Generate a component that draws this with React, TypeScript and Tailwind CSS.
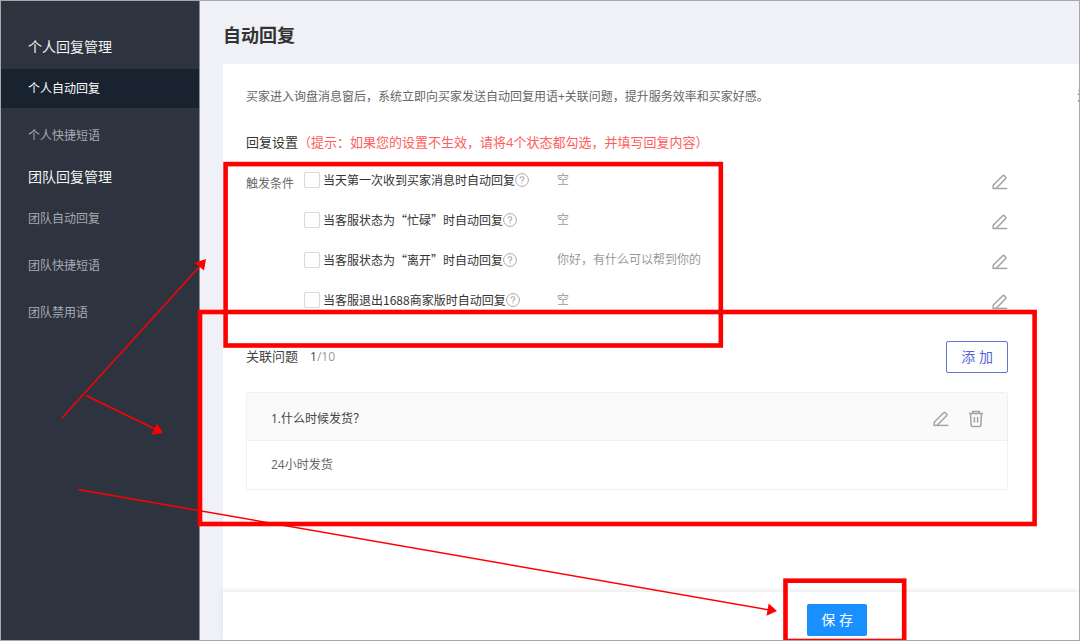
const menu = [
    { title: "个人回复管理", items: ["个人自动回复", "个人快捷短语"] },
    { title: "团队回复管理", items: ["团队自动回复", "团队快捷短语", "团队禁用语"] },
];

const conditions = [
    { id: "first", label: "当天第一次收到买家消息时自动回复", reply: "空" },
    { id: "busy", label: "当客服状态为“忙碌”时自动回复", reply: "空" },
    { id: "away", label: "当客服状态为“离开”时自动回复", reply: "你好，有什么可以帮到你的" },
    { id: "logout", label: "当客服退出1688商家版时自动回复", reply: "空" },
];

const EditIcon = () => (
    <svg width="16" height="16" viewBox="0 0 16 16" fill="none" stroke="#a3a3a3" strokeWidth="1.5">
        <path d="M1.2 14.4V11.2L10.6 1.8Q11.5 1 12.4 1.8L13.5 2.9Q14.3 3.8 13.5 4.7L4.2 14.2" />
        <path d="M0.6 14.4H15.3" />
    </svg>
);

const TrashIcon = () => (
    <svg width="16" height="18" viewBox="0 0 16 18" fill="none" stroke="#a3a3a3" strokeWidth="1.5">
        <path d="M1 3.6H15M4.6 3.4V1.6H11.4V3.4" />
        <path d="M2.5 3.8L3.2 15.4Q3.3 16.4 4.3 16.4H11.7Q12.7 16.4 12.8 15.4L13.5 3.8" />
        <path d="M6.4 7V12.6M9.6 7V12.6" />
    </svg>
);

const HelpIcon = () => (
    <svg width="14" height="14" viewBox="0 0 14 14" fill="none" stroke="#a8a8a8">
        <circle cx="7" cy="7" r="6.4" />
        <path d="M5.1 5.6Q5.1 3.8 7 3.8T8.9 5.5Q8.9 6.4 7.8 7T7 8.5" strokeWidth="1.1" />
        <path d="M7 9.5V10.6" strokeWidth="1.2" />
    </svg>
);

const Sidebar = () => (
    <nav className="w-[199px] shrink-0 border-r border-[#8b8e94] bg-[#2d3440] pt-6">
        {menu.map((group) => (
            <div key={group.title}>
                <h2 className="flex h-11 items-center pl-[27px] text-sm text-[#f2f3f4]">{group.title}</h2>
                <ul className="flex flex-col gap-2">
                    {group.items.map((item) => (
                        <li key={item}>
                            <a
                                href="#"
                                className={
                                    item === "个人自动回复"
                                        ? "flex h-[39px] items-center bg-[#19222f] pl-[27px] text-xs text-white"
                                        : "flex h-[39px] items-center pl-[27px] text-xs text-[#a7aaaf]"
                                }
                            >
                                {item}
                            </a>
                        </li>
                    ))}
                </ul>
            </div>
        ))}
    </nav>
);

const Conditions = () => (
    <div className="mt-[10px] flex">
        <div className="w-[58px] shrink-0 pt-2 text-xs leading-6 text-[#666]">触发条件</div>
        <ul className="flex-1">
            {conditions.map((c) => (
                <li key={c.id} className="flex h-10 items-start">
                    <div className="flex h-8 w-[253px] items-center">
                        <input
                            id={c.id}
                            type="checkbox"
                            className="h-4 w-4 shrink-0 appearance-none rounded-xs border border-[#d9d9d9] bg-white"
                        />
                        <label
                            htmlFor={c.id}
                            className="ml-[3px] font-['Noto_Sans_CJK_SC',sans-serif] text-xs whitespace-nowrap text-[#333]"
                        >
                            {c.label}
                        </label>
                        <button type="button" aria-label="?" className="shrink-0">
                            <HelpIcon />
                        </button>
                    </div>
                    <span className="flex h-8 flex-1 items-center text-xs text-[#999]">{c.reply}</span>
                    <button type="button" aria-label="编辑" className="pt-[10px]">
                        <EditIcon />
                    </button>
                </li>
            ))}
        </ul>
    </div>
);

const Questions = () => (
    <section>
        <div className="mt-[17px] flex h-8 items-center justify-between">
            <h3 className="text-[13px] text-[#444]">
                关联问题<span className="ml-3 text-xs">1</span>
                <span className="text-xs text-[#999]">/10</span>
            </h3>
            <button type="button" className="h-8 rounded-xs border border-[#6673d9] px-[14px] text-sm text-[#5566d4]">
                添 加
            </button>
        </div>
        <div className="mt-[19px] rounded-xs border border-[#f0f0f0] text-xs">
            <div className="flex h-12 items-center border-b border-[#f0f0f0] bg-[#fafafa] pr-[23px] pl-6">
                <span className="flex-1 pt-1 text-[#444]">1.什么时候发货？</span>
                <div className="flex items-center gap-[19px] pt-1">
                    <button type="button" aria-label="编辑">
                        <EditIcon />
                    </button>
                    <button type="button" aria-label="删除">
                        <TrashIcon />
                    </button>
                </div>
            </div>
            <p className="flex h-12 items-center pl-6 text-[#666]">24小时发货</p>
        </div>
    </section>
);

// red frames and arrows drawn over the page
const Marks = () => (
    <svg className="pointer-events-none absolute inset-0 h-full w-full" fill="none" stroke="#f00">
        <g transform="translate(-1 -1)">
            <g strokeWidth="4.6">
                <rect x="225.6" y="164.1" width="495.2" height="181.4" />
                <rect x="200" y="312" width="834.6" height="212" />
                <rect x="785.5" y="580.7" width="118.7" height="60.3" />
            </g>
            <g strokeWidth="1.5">
                <path d="M62 418L200 266" />
                <path d="M86 395.5L156 429.5" />
                <path d="M78 489.5L768 609.7" />
            </g>
            <g fill="#f00" stroke="none">
                <path d="M206 259L194.5 262.7L204 270.5Z" />
                <path d="M163 433L157 423.5L151.5 434.7Z" />
                <path d="M777 611L768.7 603.5L766.5 615.7Z" />
            </g>
        </g>
    </svg>
);

export default function App() {
    return (
        <div className="relative flex min-h-screen overflow-hidden border border-[#a8a8a8] bg-[#f0f1f6] font-['Open_Sans','Noto_Sans_CJK_SC',sans-serif]">
            <Sidebar />
            <main className="flex min-w-0 flex-1 flex-col pl-[23px]">
                <h1 className="flex h-[63px] items-center pt-[5px] text-lg font-bold text-[#333]">自动回复</h1>
                <div className="flex-1 overflow-hidden rounded-tl-xs bg-white pt-[21px] pl-[23px]">
                    <div className="flex items-center justify-between text-xs leading-6 whitespace-nowrap text-[#666]">
                        <p>买家进入询盘消息窗后，系统立即向买家发送自动回复用语+关联问题，提升服务效率和买家好感。</p>
                        <span className="w-[2px] overflow-hidden text-[#876]">注</span>
                    </div>
                    <div className="mr-[71px]">
                        <h2 className="mt-[21px] text-[13px] leading-6 text-[#333]">
                            回复设置
                            <span className="text-[#ff5c5c]">
                                （提示：如果您的设置不生效，请将4个状态都勾选，并填写回复内容）
                            </span>
                        </h2>
                        <Conditions />
                        <Questions />
                    </div>
                </div>
                <footer className="flex h-12 justify-end bg-white pt-3 pr-[212px] shadow-[0_-2px_5px_rgba(0,0,0,0.08)]">
                    <button type="button" className="h-8 rounded-xs bg-[#1890ff] px-[14px] text-sm text-white">
                        保 存
                    </button>
                </footer>
            </main>
            <Marks />
        </div>
    );
}
